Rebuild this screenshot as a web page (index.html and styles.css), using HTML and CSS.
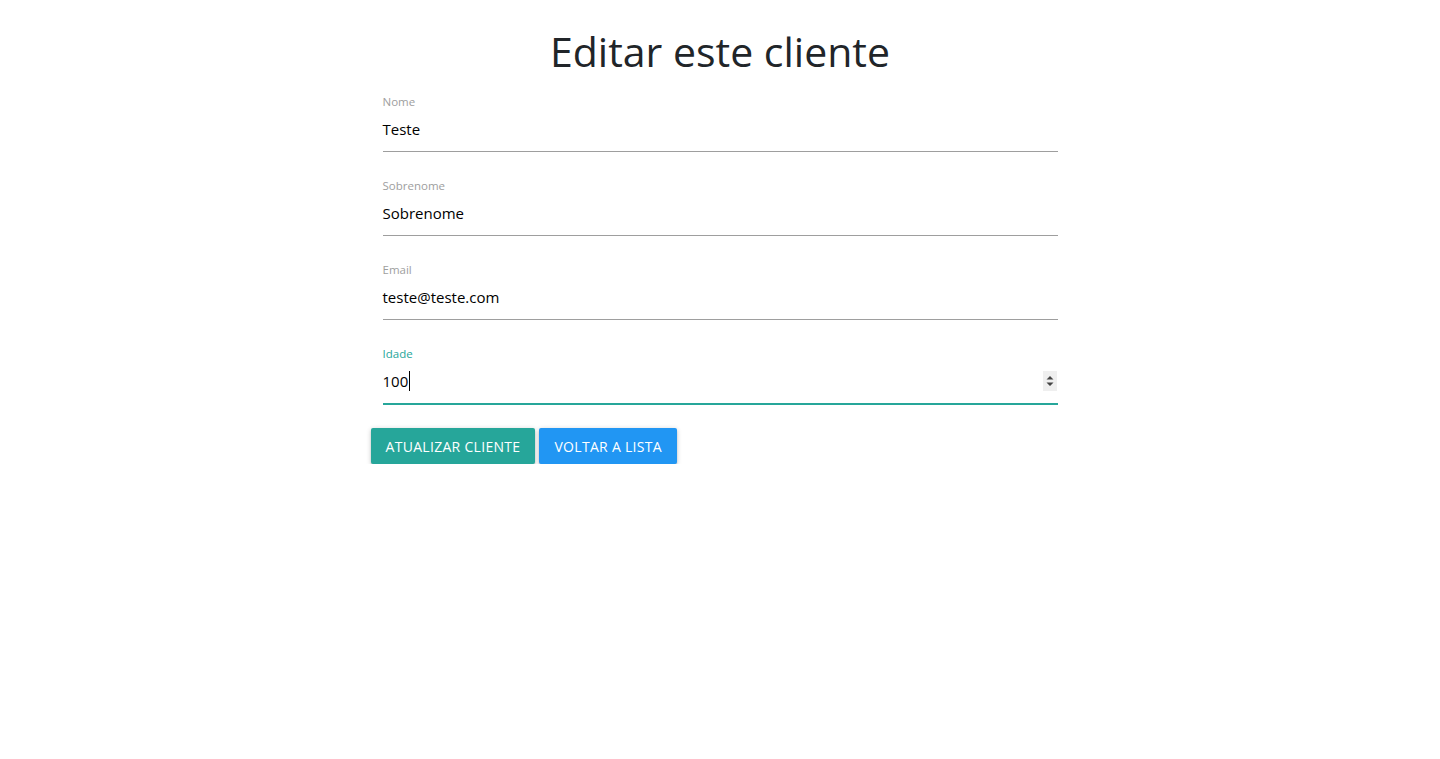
FILE: index.html
```html
<!DOCTYPE html>
<html lang="pt-BR">
<head>
<meta charset="utf-8">
<title>Editar este cliente</title>
<link rel="stylesheet" href="styles.css">
</head>
<body>
<main class="container">
  <h1 class="title">Editar este cliente</h1>
  <form class="form">
    <div class="field">
      <label class="label">Nome</label>
      <div class="input">Teste</div>
    </div>
    <div class="field">
      <label class="label">Sobrenome</label>
      <div class="input">Sobrenome</div>
    </div>
    <div class="field">
      <label class="label">Email</label>
      <div class="input">teste@teste.com</div>
    </div>
    <div class="field field-active">
      <label class="label">Idade</label>
      <div class="input">100<span class="caret"></span>
        <span class="spinner">
          <svg width="14" height="20" viewBox="0 0 14 20"><path d="M7 5 L10.5 8.5 L3.5 8.5 Z M3.5 11.5 L10.5 11.5 L7 15 Z" fill="#444"/></svg>
        </span>
      </div>
    </div>
    <div class="actions">
      <button type="button" class="btn btn-teal">Atualizar cliente</button>
      <button type="button" class="btn btn-blue">Voltar a lista</button>
    </div>
  </form>
</main>
</body>
</html>
```
FILE: styles.css
```css
* { box-sizing: border-box; }
body {
  margin: 0;
  background: #fff;
  font-family: "Open Sans", "Noto Sans", Arial, sans-serif;
  color: #212529;
}
.container {
  width: 699px;
  margin: 0 auto;
}
.title {
  margin: 0;
  padding-top: 24px;
  height: 91px;
  text-align: center;
  font-size: 41px;
  font-weight: 400;
  line-height: 54px;
  color: #212529;
}
.form {
  display: flex;
  flex-direction: column;
}
.field {
  padding: 3px 12px 0;
  display: flex;
  flex-direction: column;
  margin-bottom: 23px;
}
.label {
  font-size: 11.5px;
  line-height: 15px;
  height: 15px;
  color: #9e9e9e;
}
.input {
  position: relative;
  height: 43px;
  padding-bottom: 3px;
  display: flex;
  align-items: center;
  font-size: 15px;
  color: #000;
  border-bottom: 1px solid #9e9e9e;
}
.field-active .label { color: #26a69a; }
.field-active .input {
  border-bottom: 2px solid #26a69a;
  height: 44px;
}
.caret {
  display: inline-block;
  width: 1px;
  height: 20px;
  background: #000;
  margin-left: 1px;
}
.spinner {
  position: absolute;
  right: 1px;
  top: 10px;
  width: 14px;
  height: 20px;
  background: #efefef;
  display: flex;
}
.actions {
  display: flex;
  gap: 4px;
  margin-top: 0;
}
.btn {
  height: 36px;
  padding: 0 15px;
  border: none;
  border-radius: 2px;
  color: #fff;
  font-family: inherit;
  font-size: 14px;
  text-transform: uppercase;
  letter-spacing: 0.3px;
  box-shadow: 0 2px 2px 0 rgba(0,0,0,0.14), 0 3px 1px -2px rgba(0,0,0,0.12), 0 1px 5px 0 rgba(0,0,0,0.2);
  cursor: pointer;
}
.btn-teal { background: #26a69a; }
.btn-blue { background: #2196f3; }
```
